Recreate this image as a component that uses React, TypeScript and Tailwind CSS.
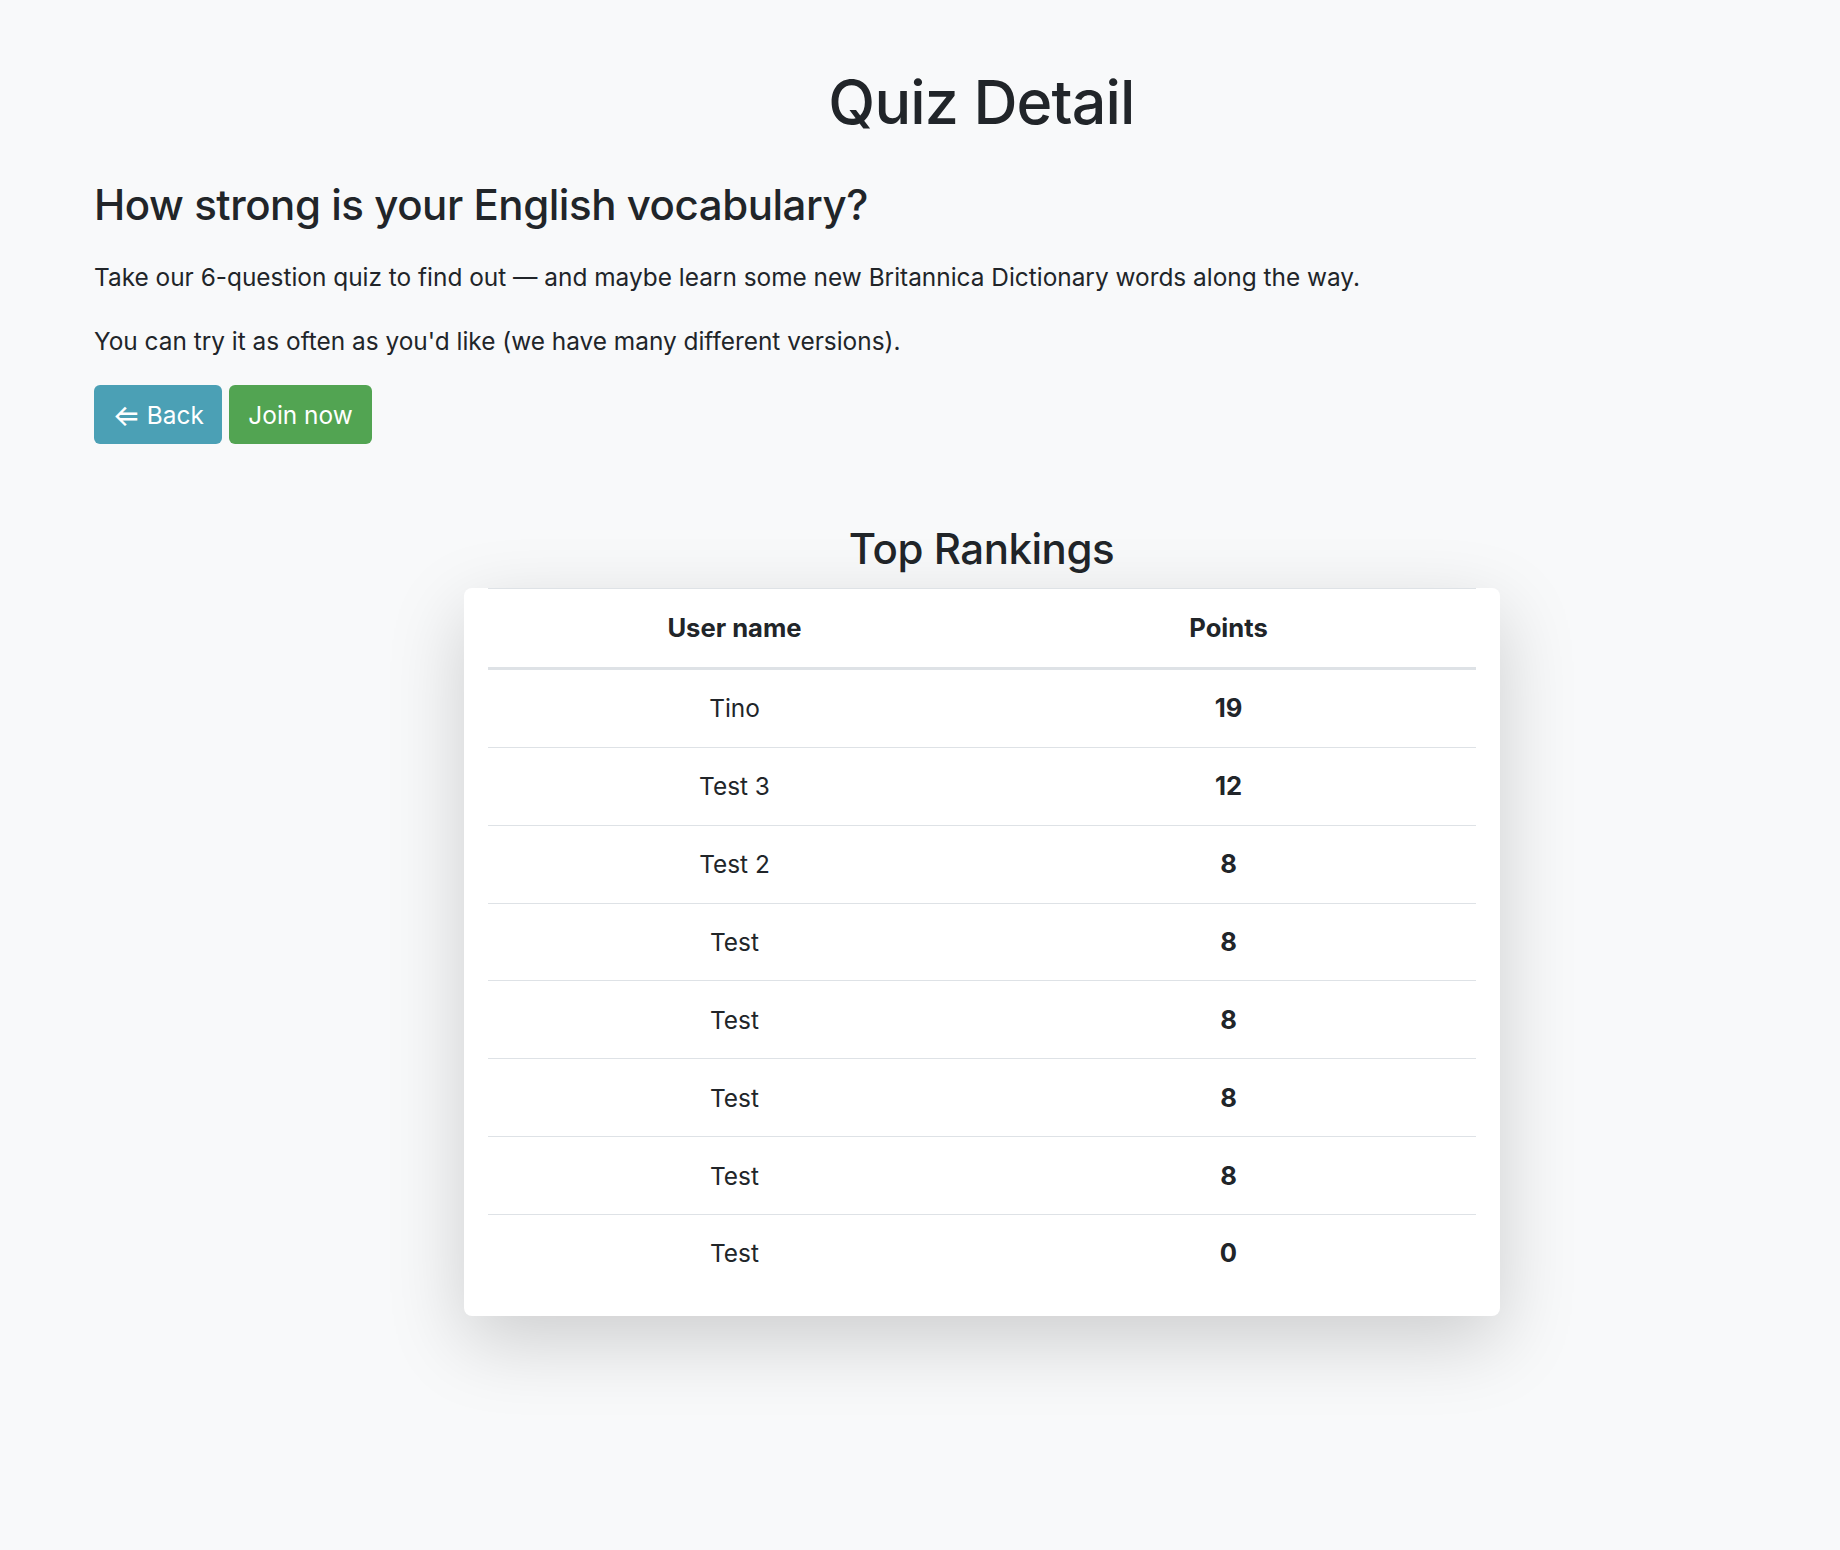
import React from "react";

type Ranking = {
  name: string;
  points: number;
};

const rankings: Ranking[] = [
  { name: "Tino", points: 19 },
  { name: "Test 3", points: 12 },
  { name: "Test 2", points: 8 },
  { name: "Test", points: 8 },
  { name: "Test", points: 8 },
  { name: "Test", points: 8 },
  { name: "Test", points: 8 },
  { name: "Test", points: 0 },
];

export default function App() {
  return (
    <div className="min-h-screen overflow-x-hidden bg-[#f8f9fa] text-[#212529] font-['Inter','Liberation_Sans',sans-serif]">
      <div className="ml-[94px] w-[1775px] pt-[64px] pb-[200px]">
        <h1 className="text-center text-[61px] leading-[77px] tracking-[-0.85px] font-medium">
          Quiz Detail
        </h1>

        <h3 className="mt-[37px] text-[42px] leading-[54px] tracking-[-0.45px] font-medium">
          How strong is your English vocabulary?
        </h3>

        <p className="mt-[26px] text-[24.4px] leading-[38.4px]">
          Take our 6-question quiz to find out — and maybe learn some new
          Britannica Dictionary words along the way.
        </p>
        <p className="mt-[25.6px] text-[24.4px] leading-[38.4px]">
          You can try it as often as you'd like (we have many different
          versions).
        </p>

        <div className="mt-[25px] flex gap-[7px]">
          <button className="flex h-[59px] w-[128px] items-center justify-center gap-[6px] rounded-[6px] bg-[#4ba0b5] text-white text-[24.4px] leading-[38.4px]">
            <span className="text-[30px] leading-[38px]">⇐</span>
            <span>Back</span>
          </button>
          <button className="h-[59px] w-[143px] rounded-[6px] bg-[#52a452] text-white text-[24.4px] leading-[38.4px]">
            Join now
          </button>
        </div>

        <h2 className="mt-[78px] text-center text-[42px] leading-[54px] tracking-[-0.45px] font-medium">
          Top Rankings
        </h2>

        <div className="mt-[12px] flex justify-center">
          <div className="w-[1036px] bg-white rounded-[8px] px-6 pb-[24px] shadow-[0_25px_77px_rgba(0,0,0,0.175)]">
            <table className="w-full border-t border-[#dee2e6] leading-[38.4px]">
              <thead>
                <tr className="border-b-[3px] border-[#dee2e6]">
                  <th className="w-1/2 pt-[19.5px] pb-[19.5px] text-center text-[25.6px] font-bold">
                    User name
                  </th>
                  <th className="w-1/2 pt-[19.5px] pb-[19.5px] text-center text-[25.6px] font-bold">
                    Points
                  </th>
                </tr>
              </thead>
              <tbody>
                {rankings.map((r, i) => (
                  <tr
                    key={i}
                    className={
                      i < rankings.length - 1
                        ? "border-b border-[#dee2e6]"
                        : ""
                    }
                  >
                    <td className="py-[19.25px] text-center text-[24.4px]">
                      {r.name}
                    </td>
                    <td className="py-[19.25px] text-center text-[25.6px] font-bold">
                      {r.points}
                    </td>
                  </tr>
                ))}
              </tbody>
            </table>
          </div>
        </div>
      </div>
    </div>
  );
}
